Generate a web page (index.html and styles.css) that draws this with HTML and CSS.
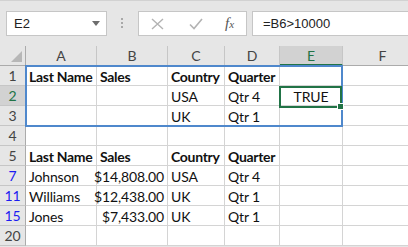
FILE: index.html
```html
<!DOCTYPE html>
<html lang="en">
<head>
  <meta charset="UTF-8">
  <title>Advanced Filter</title>
  <link rel="stylesheet" href="styles.css">
</head>
<body>
  <div class="app">
    <div class="formula-bar">
      <div class="name-box">
        <span>E2</span>
        <svg class="caret" width="8" height="5" viewBox="0 0 8 5"><path d="M0 0h8L4 5z" fill="#6d6d6d"/></svg>
      </div>
      <div class="grip">
        <svg width="3" height="11" viewBox="0 0 3 11"><rect x="0" y="0" width="2" height="2" fill="#a8a8a8"/><rect x="0" y="4" width="2" height="2" fill="#a8a8a8"/><rect x="0" y="8" width="2" height="2" fill="#a8a8a8"/></svg>
      </div>
      <div class="fx-box">
        <svg class="icon" width="13" height="12" viewBox="0 0 13 12"><path d="M1 1l11 10M12 1L1 11" stroke="#b3b3b3" stroke-width="1.4" fill="none"/></svg>
        <svg class="icon" width="14" height="12" viewBox="0 0 14 12"><path d="M1 6.5l4 4L13 1" stroke="#b3b3b3" stroke-width="1.6" fill="none"/></svg>
        <span class="fx">f<small>x</small></span>
      </div>
      <div class="formula">=B6&gt;10000</div>
    </div>

    <div class="sheet">
      <div class="grid">
        <div class="corner"><svg width="11" height="11" viewBox="0 0 11 11"><path d="M11 0v11H0z" fill="#b7b7b7"/></svg></div>
        <div class="col-head">A</div>
        <div class="col-head">B</div>
        <div class="col-head">C</div>
        <div class="col-head">D</div>
        <div class="col-head active">E</div>
        <div class="col-head">F</div>

        <div class="row-head">1</div>
        <div class="cell bold">Last Name</div>
        <div class="cell bold">Sales</div>
        <div class="cell bold">Country</div>
        <div class="cell bold">Quarter</div>
        <div class="cell"></div>
        <div class="cell"></div>

        <div class="row-head active">2</div>
        <div class="cell"></div>
        <div class="cell"></div>
        <div class="cell">USA</div>
        <div class="cell">Qtr 4</div>
        <div class="cell center">TRUE</div>
        <div class="cell"></div>

        <div class="row-head">3</div>
        <div class="cell"></div>
        <div class="cell"></div>
        <div class="cell">UK</div>
        <div class="cell">Qtr 1</div>
        <div class="cell"></div>
        <div class="cell"></div>

        <div class="row-head">4</div>
        <div class="cell"></div>
        <div class="cell"></div>
        <div class="cell"></div>
        <div class="cell"></div>
        <div class="cell"></div>
        <div class="cell"></div>

        <div class="row-head">5</div>
        <div class="cell bold">Last Name</div>
        <div class="cell bold">Sales</div>
        <div class="cell bold">Country</div>
        <div class="cell bold">Quarter</div>
        <div class="cell"></div>
        <div class="cell"></div>

        <div class="row-head filtered">7</div>
        <div class="cell">Johnson</div>
        <div class="cell right">$14,808.00</div>
        <div class="cell">USA</div>
        <div class="cell">Qtr 4</div>
        <div class="cell"></div>
        <div class="cell"></div>

        <div class="row-head filtered">11</div>
        <div class="cell">Williams</div>
        <div class="cell right">$12,438.00</div>
        <div class="cell">UK</div>
        <div class="cell">Qtr 1</div>
        <div class="cell"></div>
        <div class="cell"></div>

        <div class="row-head filtered">15</div>
        <div class="cell">Jones</div>
        <div class="cell right">$7,433.00</div>
        <div class="cell">UK</div>
        <div class="cell">Qtr 1</div>
        <div class="cell"></div>
        <div class="cell"></div>

        <div class="row-head">20</div>
        <div class="cell"></div>
        <div class="cell"></div>
        <div class="cell"></div>
        <div class="cell"></div>
        <div class="cell"></div>
        <div class="cell"></div>
      </div>

      <div class="criteria-range"></div>
      <div class="active-cell"><span class="fill-handle"></span></div>
    </div>
  </div>
</body>
</html>
```

FILE: styles.css
```css
body {
  margin: 0;
  padding: 0;
  font-family: Lato, "Liberation Sans", sans-serif;
  background: #fff;
}

.app {
  width: 408px;
  height: 247px;
  overflow: hidden;
  background: #e6e6e6;
  border-top: 1px solid #d2d2d2;
  box-sizing: border-box;
}

/* formula bar */
.formula-bar {
  display: flex;
  align-items: stretch;
  height: 25px;
  padding: 10px 0 0 6px;
  margin-bottom: 10px;
}

.name-box {
  width: 101px;
  box-sizing: border-box;
  background: #fff;
  border: 1px solid #c6c6c6;
  display: flex;
  align-items: center;
  justify-content: space-between;
  padding: 0 6px 0 7px;
  font-family: "Liberation Sans", sans-serif;
  font-size: 13px;
  color: #222;
}

.grip {
  width: 31px;
  display: flex;
  align-items: center;
  justify-content: center;
}

.fx-box {
  width: 109px;
  box-sizing: border-box;
  background: #fff;
  border: 1px solid #c6c6c6;
  display: flex;
  align-items: center;
  padding-left: 12px;
}

.fx-box .icon:nth-child(2) {
  margin-left: 25px;
}

.fx {
  margin-left: 22px;
  font-family: "Liberation Serif", serif;
  font-style: italic;
  font-size: 15px;
  color: #555;
}

.fx small {
  font-size: 11px;
}

.formula {
  flex: 1;
  margin-left: 5px;
  background: #fff;
  border: 1px solid #c6c6c6;
  border-right: none;
  display: flex;
  align-items: center;
  padding-left: 10px;
  font-family: "Liberation Sans", sans-serif;
  font-size: 13px;
  color: #222;
}

/* sheet */
.sheet {
  position: relative;
}

.grid {
  display: grid;
  grid-template-columns: 26px 71px 71px 57px 55px 63px 80px;
  grid-template-rows: 20px repeat(9, 20px);
  background: #fff;
}

.corner,
.col-head,
.row-head {
  background: #e6e6e6;
  color: #444;
  font-size: 14px;
  display: flex;
  align-items: center;
  justify-content: center;
}

.corner {
  justify-content: flex-end;
  align-items: flex-end;
  padding: 0 3px 3px 0;
  border-right: 1px solid #ababab;
  border-bottom: 1px solid #ababab;
}

.col-head {
  border-right: 1px solid #c6c6c6;
  border-bottom: 1px solid #ababab;
}

.col-head.active {
  background: #d2d2d2;
  color: #217346;
  border-bottom: 2px solid #217346;
}

.row-head {
  border-right: 1px solid #ababab;
  border-bottom: 1px solid #c6c6c6;
}

.row-head.active {
  background: #d2d2d2;
  color: #217346;
}

.row-head.filtered {
  color: #1c1cf0;
}

.cell {
  border-right: 1px solid #d4d4d4;
  border-bottom: 1px solid #d4d4d4;
  font-size: 14px;
  letter-spacing: -0.15px;
  color: #111;
  padding: 1px 3px 0;
  display: flex;
  align-items: center;
  white-space: nowrap;
  overflow: visible;
}

.cell.bold {
  font-weight: bold;
  letter-spacing: -0.3px;
}

.cell.right {
  justify-content: flex-end;
}

.cell.center {
  justify-content: center;
}

/* overlays */
.criteria-range {
  position: absolute;
  left: 25px;
  top: 19px;
  width: 318px;
  height: 62px;
  border: 2px solid #4f88cc;
  box-sizing: border-box;
  pointer-events: none;
}

.active-cell {
  position: absolute;
  left: 279px;
  top: 40px;
  width: 63px;
  height: 22px;
  border: 2px solid #217346;
  box-sizing: border-box;
}

.fill-handle {
  position: absolute;
  right: -4px;
  bottom: -4px;
  width: 5px;
  height: 5px;
  background: #217346;
  border: 1px solid #fff;
}
```
